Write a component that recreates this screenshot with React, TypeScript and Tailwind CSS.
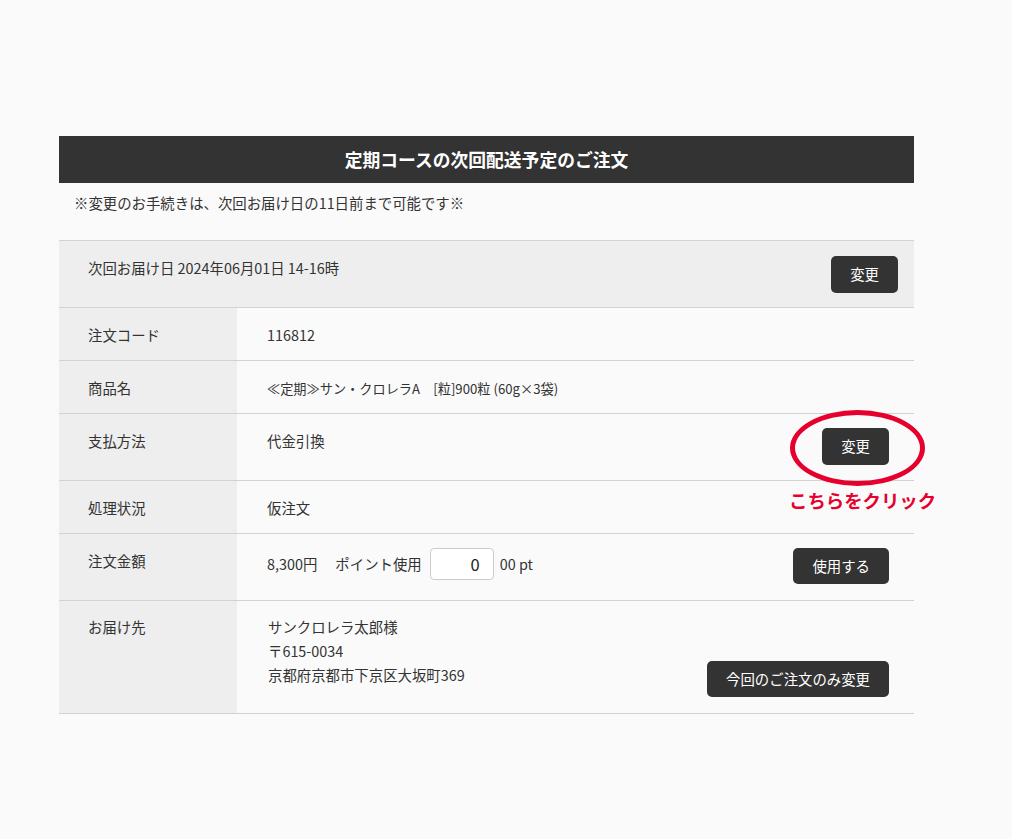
import React from "react";

const font = { fontFamily: '"Noto Sans CJK JP", "Noto Sans", sans-serif' };

function DarkButton({ children, className = "" }: { children: React.ReactNode; className?: string }) {
  return (
    <button
      type="button"
      className={`bg-[#333333] text-white text-[14.4px] leading-none rounded-[5px] px-[19px] ${className}`}
    >
      {children}
    </button>
  );
}

function Label({ children }: { children: React.ReactNode }) {
  return (
    <div className="w-[178px] shrink-0 bg-[#eeeeee] pl-[29px] pt-[15px] text-[14.4px] leading-6">
      {children}
    </div>
  );
}

export default function App() {
  return (
    <div style={font} className="min-h-[839px] w-full bg-[#fafafa] text-[#333333]">
      <div className="pt-[136px] pl-[59px]">
        <div className="relative w-[855px]">
          {/* title bar */}
          <div className="h-[47px] bg-[#333333] flex items-center justify-center">
            <h1 className="text-white text-[17.8px] font-bold">定期コースの次回配送予定のご注文</h1>
          </div>

          {/* notice */}
          <div className="h-[57px] pl-[15px] pt-[8px] text-[14.4px] leading-6">
            ※変更のお手続きは、次回お届け日の11日前まで可能です※
          </div>

          {/* next delivery */}
          <div className="flex justify-between items-start bg-[#eeeeee] border-t border-b border-[#d2d2d2] h-[68px]">
            <div className="pl-[29px] pt-[15px] text-[14.4px] leading-6">次回お届け日 2024年06月01日 14-16時</div>
            <DarkButton className="h-[37px] mt-[15px] mr-[16px]">変更</DarkButton>
          </div>

          {/* order detail rows */}
          <div className="flex border-b border-[#d2d2d2] h-[53px]">
            <Label>注文コード</Label>
            <div className="flex-1 pl-[30px] pt-[15px] text-[14.4px] leading-6">116812</div>
          </div>

          <div className="flex border-b border-[#d2d2d2] h-[53px]">
            <Label>商品名</Label>
            <div className="flex-1 pl-[30px] pt-[16px] text-[13.2px] leading-6">
              ≪定期≫サン・クロレラA　[粒]900粒 (60g×3袋)
            </div>
          </div>

          <div className="flex border-b border-[#d2d2d2] h-[67px]">
            <Label>支払方法</Label>
            <div className="flex-1 pl-[30px] pr-[25px] flex justify-between items-start">
              <div className="pt-[15px] text-[14.4px] leading-6">代金引換</div>
              <DarkButton className="h-[37px] mt-[14px]">変更</DarkButton>
            </div>
          </div>

          <div className="flex border-b border-[#d2d2d2] h-[53px]">
            <Label>処理状況</Label>
            <div className="flex-1 pl-[30px] pt-[15px] text-[14.4px] leading-6">仮注文</div>
          </div>

          <div className="flex border-b border-[#d2d2d2] h-[67px]">
            <Label>注文金額</Label>
            <div className="flex-1 pl-[30px] pr-[25px] flex justify-between items-start">
              <div className="flex items-center h-[32px] mt-[14px] text-[14.4px]">
                <span>8,300円</span>
                <span className="ml-[18px]">ポイント使用</span>
                <input
                  readOnly
                  value="0"
                  className="ml-[8px] w-[64px] h-[32px] bg-white border border-[#cccccc] rounded-[4px] text-right pr-[13px] text-[16.5px] text-[#222222] outline-none"
                  style={font}
                />
                <span className="ml-[6px]">00 pt</span>
              </div>
              <DarkButton className="h-[36px] mt-[14px]">使用する</DarkButton>
            </div>
          </div>

          <div className="flex border-b border-[#d2d2d2] h-[113px]">
            <div className="w-[178px] shrink-0 bg-[#eeeeee] pl-[29px] pt-[14px] text-[14.4px] leading-6">お届け先</div>
            <div className="flex-1 pl-[31px] pr-[25px] flex justify-between items-start">
              <div className="pt-[14px] text-[14.4px] leading-6">
                <div>サンクロレラ太郎様</div>
                <div>〒615-0034</div>
                <div>京都府京都市下京区大坂町369</div>
              </div>
              <DarkButton className="h-[36px] mt-[60px]">今回のご注文のみ変更</DarkButton>
            </div>
          </div>

          {/* callout around the payment change button */}
          <div className="absolute left-[731px] top-[274px] w-[135px] h-[76px] rounded-[50%] border-[5px] border-[#e6002d] pointer-events-none" />
          <div className="absolute left-[730px] top-[352px] text-[18.4px] leading-6 font-bold text-[#e6002d] whitespace-nowrap">
            こちらをクリック
          </div>
        </div>
      </div>
    </div>
  );
}
